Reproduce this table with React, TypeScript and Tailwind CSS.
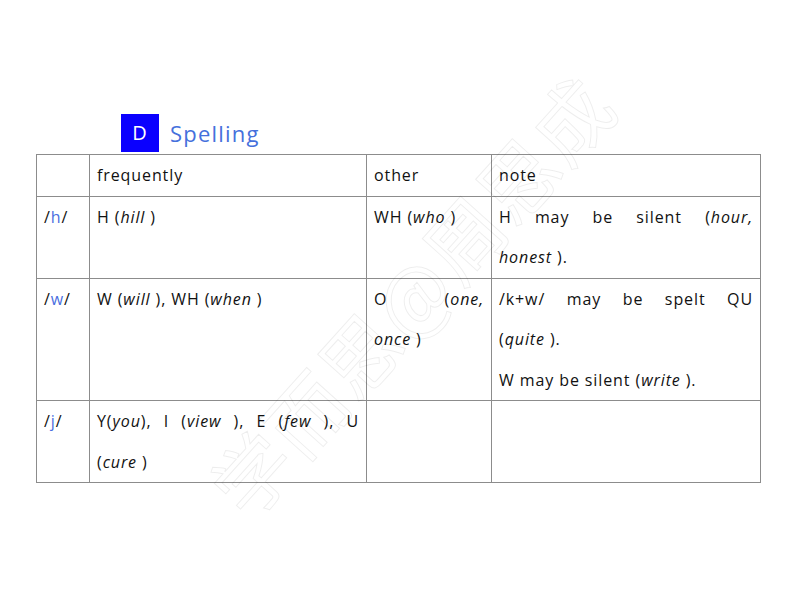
import React from 'react';

const B = ({ children }: { children: React.ReactNode }) => (
  <span className="text-[#4a6fe0]">{children}</span>
);

const I = ({ children }: { children: React.ReactNode }) => (
  <em className="italic">{children}</em>
);

// a line stretched to the full cell width, like justified text in the source
const J = ({ children }: { children: React.ReactNode }) => (
  <div className="text-justify [text-align-last:justify]">{children}</div>
);

const App: React.FC = () => {
  const cell = 'border border-[#8c8c8c] align-top px-[7px] leading-[40.5px]';
  return (
    <div className="relative w-[800px] h-[600px] overflow-hidden bg-white font-['Open_Sans',sans-serif] text-[16px] font-medium tracking-[0.9px] text-[#111]">
      <div className="pt-[114px] pl-[36px]">
        {/* Section heading */}
        <div className="flex items-center ml-[85px] mb-[2px]">
          <div className="w-[38px] h-[38px] bg-[#0a00ff] text-white flex items-center justify-center text-[20px]">
            D
          </div>
          <div className="ml-[11px] text-[22px] text-[#4570dc] tracking-[1.2px]">Spelling</div>
        </div>

        <table className="table-fixed border-collapse w-[724px]">
          <colgroup>
            <col className="w-[53px]" />
            <col className="w-[277px]" />
            <col className="w-[125px]" />
            <col className="w-[269px]" />
          </colgroup>
          <tbody>
            <tr>
              <td className={cell}></td>
              <td className={cell}>frequently</td>
              <td className={cell}>other</td>
              <td className={cell}>note</td>
            </tr>
            <tr>
              <td className={`${cell} px-[6px]`}>/<B>h</B>/</td>
              <td className={cell}>H (<I>hill</I> )</td>
              <td className={cell}>WH (<I>who</I> )</td>
              <td className={cell}>
                <J>H may be silent (<I>hour,</I></J>
                <div><I>honest</I> ).</div>
              </td>
            </tr>
            <tr>
              <td className={`${cell} px-[6px]`}>/<B>w</B>/</td>
              <td className={cell}>W (<I>will</I> ), WH (<I>when</I> )</td>
              <td className={cell}>
                <J>O (<I>one,</I></J>
                <div><I>once</I> )</div>
              </td>
              <td className={cell}>
                <J>/k+w/ may be spelt QU</J>
                <div>(<I>quite</I> ).</div>
                <div>W may be silent (<I>write</I> ).</div>
              </td>
            </tr>
            <tr>
              <td className={`${cell} px-[6px]`}>/<B>j</B>/</td>
              <td className={cell}>
                <J>Y(<I>you</I>), I (<I>view</I> ), E (<I>few</I> ), U</J>
                <div>(<I>cure</I> )</div>
              </td>
              <td className={cell}></td>
              <td className={cell}></td>
            </tr>
          </tbody>
        </table>
      </div>

      {/* watermark */}
      <div className="absolute left-[130px] top-[255px] w-[560px] text-center rotate-[-48deg] pointer-events-none select-none font-['Noto_Sans_CJK_SC',sans-serif] font-normal tracking-[2px] text-[78px] leading-none text-transparent [-webkit-text-stroke:1px_rgba(0,0,0,0.07)]">
        学而思@周思成
      </div>
    </div>
  );
};

export default App;
